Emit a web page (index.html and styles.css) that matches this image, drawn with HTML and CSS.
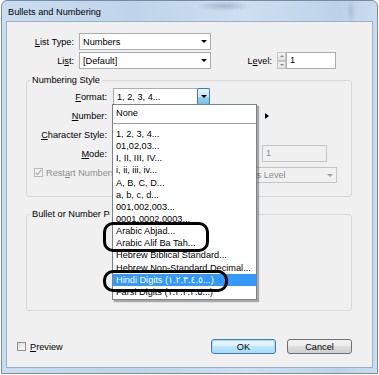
FILE: index.html
```html
<!DOCTYPE html>
<html lang="en">
<head>
    <meta charset="UTF-8">
    <title>Bullets and Numbering</title>
    <link rel="stylesheet" href="styles.css">
</head>
<body>
<div class="window">
    <div class="titlebar">Bullets and Numbering</div>
    <div class="client">
        <div class="top-rows">
            <div class="row">
                <span class="lbl lbl-main"><u>L</u>ist Type:</span>
                <div class="select w-main"><span class="val">Numbers</span><i class="arrow"></i></div>
            </div>
            <div class="row">
                <span class="lbl lbl-main">Li<u>s</u>t:</span>
                <div class="select w-main"><span class="val">[Default]</span><i class="arrow"></i></div>
                <span class="lbl lbl-level">L<u>e</u>vel:</span>
                <div class="spinner"><i class="spin"><i class="tri-up"></i></i><i class="spin"><i class="tri-down"></i></i></div>
                <div class="input w-level">1</div>
            </div>
        </div>

        <fieldset class="group group-numbering">
            <legend>Numbering Style</legend>
            <div class="rows">
                <div class="row">
                    <span class="lbl lbl-num"><u>F</u>ormat:</span>
                    <div class="select w-num"><span class="val">1, 2, 3, 4...</span><i class="drop-btn"><i class="arrow"></i></i></div>
                </div>
                <div class="row">
                    <span class="lbl lbl-num"><u>N</u>umber:</span>
                    <div class="select w-num"></div>
                    <i class="flyout"></i>
                </div>
                <div class="row">
                    <span class="lbl lbl-num"><u>C</u>haracter Style:</span>
                    <div class="select w-num"></div>
                </div>
                <div class="row">
                    <span class="lbl lbl-num"><u>M</u>ode:</span>
                    <div class="select w-num"></div>
                    <div class="input disabled w-start">1</div>
                </div>
                <div class="row">
                    <span class="check disabled"><svg width="7" height="7" viewBox="0 0 7 7"><polyline points="0.8,3.6 2.6,5.6 6.2,0.8" fill="none" stroke="#a8a8a8" stroke-width="1.2"/></svg></span>
                    <span class="restart-text">Rest<u>a</u>rt Numbers</span>
                    <div class="select disabled w-after"><span class="val">Any Previous Level</span><i class="arrow"></i></div>
                </div>
            </div>
        </fieldset>

        <fieldset class="group group-position">
            <legend><span class="legend-cut">Bullet or Number Position</span></legend>
        </fieldset>

        <div class="actions">
            <span class="check"></span>
            <span class="preview"><u>P</u>review</span>
            <button class="btn btn-default">OK</button>
            <button class="btn">Cancel</button>
        </div>
    </div>

    <div class="popup">
        <div class="opt-none">None</div>
        <ul class="opts">
            <li>1, 2, 3, 4...</li>
            <li>01,02,03...</li>
            <li>I, II, III, IV...</li>
            <li>i, ii, iii, iv...</li>
            <li>A, B, C, D...</li>
            <li>a, b, c, d...</li>
            <li>001,002,003...</li>
            <li>0001,0002,0003...</li>
            <li>Arabic Abjad...</li>
            <li>Arabic Alif Ba Tah...</li>
            <li>Hebrew Biblical Standard...</li>
            <li>Hebrew Non-Standard Decimal...</li>
            <li class="selected">Hindi Digits (١.٢.٣.٤.٥...)</li>
            <li>Farsi Digits (۱.۲.۳.۴.۵...)</li>
        </ul>
    </div>

    <div class="mark mark-arabic"></div>
    <div class="mark mark-hindi"></div>
</div>
</body>
</html>
```

FILE: styles.css
```css
* { box-sizing: border-box; }

body {
    margin: 0;
    background: #fff;
    font-family: "Liberation Sans", "DejaVu Sans", sans-serif;
    font-size: 9.2px;
    color: #000;
}

.window {
    position: relative;
    margin-left: 1px;
    width: 377px;
    height: 374px;
    border: 1px solid #7a8da3;
    border-radius: 6px 6px 0 0;
    padding: 0 5px 6px 5px;
    display: flex;
    flex-direction: column;
    background:
        radial-gradient(ellipse 28px 5px at 222px 5px, rgba(80, 100, 130, 0.3), transparent),
        radial-gradient(ellipse 5px 14px at 349px 10px, rgba(90, 110, 140, 0.2), transparent),
        linear-gradient(to right, #cadcf0 0, #bfd4ea 35%, #cddff1 65%, #bdd2e9 90%, #cbdcf0 100%);
}

.titlebar {
    height: 21px;
    line-height: 22px;
    padding-left: 1px;
}

.client {
    flex: 1;
    background: #f0f0f0;
    box-shadow: 0 0 0 1px #9bb0c6;
    display: flex;
    flex-direction: column;
}

.row {
    display: flex;
    align-items: center;
    height: 17px;
}

.top-rows {
    padding-top: 11px;
    display: flex;
    flex-direction: column;
    gap: 2px;
}

.lbl { text-align: right; white-space: nowrap; }
.lbl-main { width: 67px; margin-right: 5px; }
.lbl-level { width: 61px; margin-right: 5px; }
.lbl-num { width: 80px; margin-right: 6px; }

.select {
    height: 17px;
    background: #fff;
    border: 1px solid #abadb3;
    display: flex;
    align-items: center;
    padding-left: 3px;
}
.select .val { flex: 1; white-space: nowrap; overflow: hidden; }
.w-main { width: 132px; }
.w-num { width: 97px; }
.w-after { width: 134px; align-self: flex-start; margin: 3px 0 0 91px; height: 16px; }

.arrow {
    width: 0;
    height: 0;
    border-left: 3px solid transparent;
    border-right: 3px solid transparent;
    border-top: 3px solid #000;
    margin-right: 3px;
}

.drop-btn {
    align-self: stretch;
    width: 13px;
    margin: -1px -1px -1px 0;
    border: 1px solid #3c7fb1;
    border-radius: 2px;
    background: linear-gradient(#e6f4fc, #c9e7f8 50%, #9fd3f0 50%, #78bfe4);
    display: flex;
    align-items: center;
    justify-content: center;
}
.drop-btn .arrow { margin: 0; }

.flyout {
    margin-left: 55px;
    width: 0;
    height: 0;
    border-top: 3px solid transparent;
    border-bottom: 3px solid transparent;
    border-left: 4px solid #000;
}

.spinner {
    width: 9px;
    height: 17px;
    display: flex;
    flex-direction: column;
}
.spin {
    flex: 1;
    border: 1px solid #c2c2c2;
    background: linear-gradient(#f4f4f4, #e2e2e2);
    display: flex;
    align-items: center;
    justify-content: center;
}
.tri-up, .tri-down {
    width: 0;
    height: 0;
    border-left: 2px solid transparent;
    border-right: 2px solid transparent;
}
.tri-up { border-bottom: 2px solid #8a8a8a; }
.tri-down { border-top: 2px solid #8a8a8a; }

.input {
    height: 17px;
    background: #fff;
    border: 1px solid #abadb3;
    padding-left: 3px;
    line-height: 15px;
}
.w-level { width: 50px; }
.w-start { width: 65px; margin-left: 52px; }

.disabled {
    background: #f0f0f0;
    border-color: #c4c4c4;
    color: #8d8d8d;
}
.select.disabled .arrow { border-top-color: #a0a0a0; }

.group {
    margin: 0 0 0 19px;
    width: 326px;
    padding: 2px 0 0 0;
    border: 1px solid #d8d8d8;
    border-radius: 3px;
    min-width: 0;
}
.group legend {
    margin-left: 3px;
    padding: 0 2px;
    line-height: 12px;
}
.legend-cut {
    display: block;
    width: 78px;
    overflow: hidden;
    white-space: nowrap;
}
.group-numbering { margin-top: 5px; padding-bottom: 15px; }
.group-position { margin-top: 11px; height: 103px; }

.rows {
    display: flex;
    flex-direction: column;
    gap: 2px;
}

.check {
    width: 9px;
    height: 9px;
    border: 1px solid #8e8f8f;
    background: linear-gradient(135deg, #dcdcdc, #fdfdfd);
    display: flex;
    align-items: center;
    justify-content: center;
}
.check.disabled { border-color: #b8b8b8; background: #f4f4f4; margin-left: 7px; }

.restart-text {
    width: 66px;
    margin-left: 3px;
    color: #8d8d8d;
    white-space: nowrap;
    overflow: hidden;
}

.actions {
    display: flex;
    align-items: center;
    margin-top: 28px;
    padding: 0 20px 0 10px;
}
.preview { margin-left: 4px; }

.btn {
    width: 65px;
    height: 15px;
    padding: 0;
    font: inherit;
    color: #000;
    border: 1px solid #707070;
    border-radius: 3px;
    background: linear-gradient(#f2f2f2, #ebebeb 50%, #dddddd 50%, #cfcfcf);
}
.btn + .btn { margin-left: 11px; }
.btn-default {
    margin-left: auto;
    border-color: #3c7fb1;
    box-shadow: inset 0 0 0 1px #a8dbf7;
    background: linear-gradient(#eaf6fd, #d9f0fc 50%, #bee6fd 50%, #a7d9f5);
}

.popup {
    position: absolute;
    left: 110px;
    top: 103px;
    width: 145px;
    height: 196px;
    background: #fff;
    border: 1px solid #7d8188;
    box-shadow: 2px 2px 1px rgba(0, 0, 0, 0.3);
}
.opt-none {
    height: 19px;
    padding: 2px 0 0 3px;
    line-height: 12px;
    border-bottom: 1px solid #9a9a9a;
}
.opts {
    list-style: none;
    margin: 0;
    padding: 4px 0 0 0;
}
.opts li {
    height: 12.15px;
    line-height: 12.15px;
    padding-left: 3px;
    white-space: nowrap;
}
.opts li.selected {
    background: #3399ff;
    color: #fff;
}

.mark {
    position: absolute;
    border: 3px solid #000;
    border-radius: 10px;
}
.mark-arabic { left: 101px; top: 221px; width: 106px; height: 30px; }
.mark-hindi { left: 101px; top: 269px; width: 125px; height: 22px; }
```
